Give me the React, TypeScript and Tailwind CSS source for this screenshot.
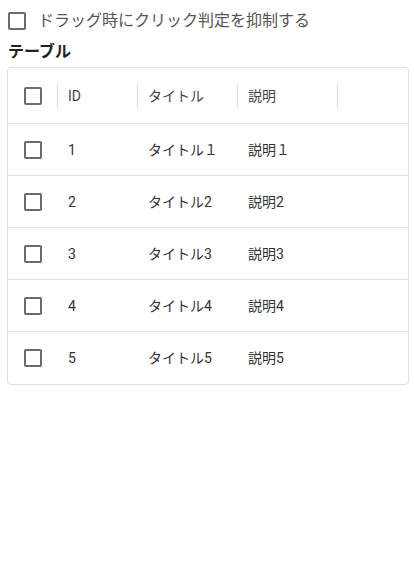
import React from "react";

const rows = [
  { id: 1, title: "タイトル１", desc: "説明１" },
  { id: 2, title: "タイトル2", desc: "説明2" },
  { id: 3, title: "タイトル3", desc: "説明3" },
  { id: 4, title: "タイトル4", desc: "説明4" },
  { id: 5, title: "タイトル5", desc: "説明5" },
];

function Box() {
  return <span className="block w-[18px] h-[18px] border-2 border-[#6b6b6b] rounded-[2px]" />;
}

function Sep() {
  return <span className="absolute right-0 top-[16px] h-[24px] w-px bg-[#e0e0e0]" />;
}

export default function App() {
  const font = { fontFamily: 'Roboto, "Noto Sans CJK JP", sans-serif' };
  return (
    <div className="p-2 text-[#222]" style={font}>
      <label className="flex items-center h-[24px] mt-[1px]">
        <Box />
        <span className="ml-3 text-base text-[#555]">ドラッグ時にクリック判定を抑制する</span>
      </label>
      <h2 className="text-base font-bold mt-[7px] leading-6">テーブル</h2>
      <div className="mt-[3px] ml-[-1px] mr-[-3px] border border-[#e0e0e0] rounded text-sm">
        <div className="flex h-[56px] border-b border-[#e0e0e0] text-[#444]">
          <div className="relative w-[50px] flex items-center justify-center">
            <Box />
            <Sep />
          </div>
          <div className="relative w-[80px] flex items-center px-[10px]">
            ID
            <Sep />
          </div>
          <div className="relative w-[100px] flex items-center px-[10px]">
            タイトル
            <Sep />
          </div>
          <div className="relative w-[100px] flex items-center px-[10px]">
            説明
            <Sep />
          </div>
        </div>
        {rows.map((r, i) => (
          <div
            key={r.id}
            className={`flex h-[52px] text-[#333] ${i < rows.length - 1 ? "border-b border-[#e0e0e0]" : ""}`}
          >
            <div className="w-[50px] flex items-center justify-center">
              <Box />
            </div>
            <div className="w-[80px] flex items-center px-[10px]">{r.id}</div>
            <div className="w-[100px] flex items-center px-[10px]">{r.title}</div>
            <div className="w-[100px] flex items-center px-[10px]">{r.desc}</div>
          </div>
        ))}
      </div>
    </div>
  );
}
